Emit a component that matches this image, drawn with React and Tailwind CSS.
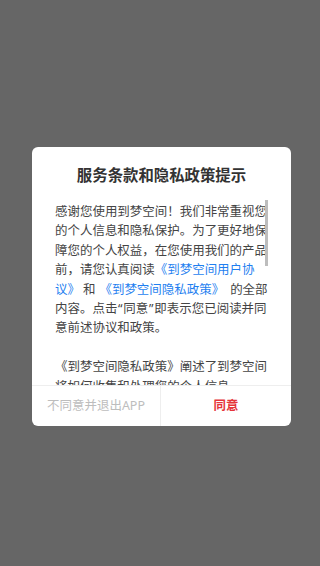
import React from "react";

const font = { fontFamily: '"Noto Sans", "Noto Sans CJK SC", sans-serif' };

function Blue({ children }) {
  return <span className="text-[#1f7ff0]">{children}</span>;
}

export default function App() {
  return (
    <div
      className="w-full h-[566px] bg-[#666666] pt-[147px] pl-[32px] overflow-hidden"
      style={font}
    >
      <div className="w-[259px] h-[279px] bg-white rounded-[6px] flex flex-col overflow-hidden">
        <div className="pt-[18px] h-[52px] text-center text-[15.4px] leading-[22px] font-bold text-[#333333]">
          服务条款和隐私政策提示
        </div>
        <div className="relative h-[186px] overflow-hidden pl-[23px] pt-[3px]">
          <div className="w-[214px] text-[12.47px] leading-[19.4px] text-[#444444] whitespace-nowrap">
            <div>感谢您使用到梦空间！我们非常重视您</div>
            <div>的个人信息和隐私保护。为了更好地保</div>
            <div>障您的个人权益，在您使用我们的产品</div>
            <div>
              前，请您认真阅读<Blue>《到梦空间用户协</Blue>
            </div>
            <div>
              <Blue>议》</Blue>
              <span className="inline-block w-[3px]" />和
              <span className="inline-block w-[4px]" />
              <Blue>《到梦空间隐私政策》</Blue>
              <span className="inline-block w-[6px]" />的全部
            </div>
            <div>
              内容。点击<span className="inline-block w-[6px] text-center">“</span>同意<span className="inline-block w-[6px] text-center">”</span>即表示您已阅读并同
            </div>
            <div>意前述协议和政策。</div>
            <div className="h-[19.4px]" />
            <div>《到梦空间隐私政策》阐述了到梦空间</div>
            <div>将如何收集和处理您的个人信息。</div>
          </div>
          <div className="absolute left-[233px] top-[1px] w-[3px] h-[66px] bg-[#bdbdbd]" />
        </div>
        <div className="flex h-[41px] border-t border-[#eeeeee]">
          <div className="w-[129px] flex items-center justify-center text-[12.47px] text-[#bdbdbd] border-r border-[#eeeeee]">
            不同意并退出APP
          </div>
          <div className="flex-1 flex items-center justify-center text-[12.47px] font-bold text-[#e5353a]">
            同意
          </div>
        </div>
      </div>
    </div>
  );
}
